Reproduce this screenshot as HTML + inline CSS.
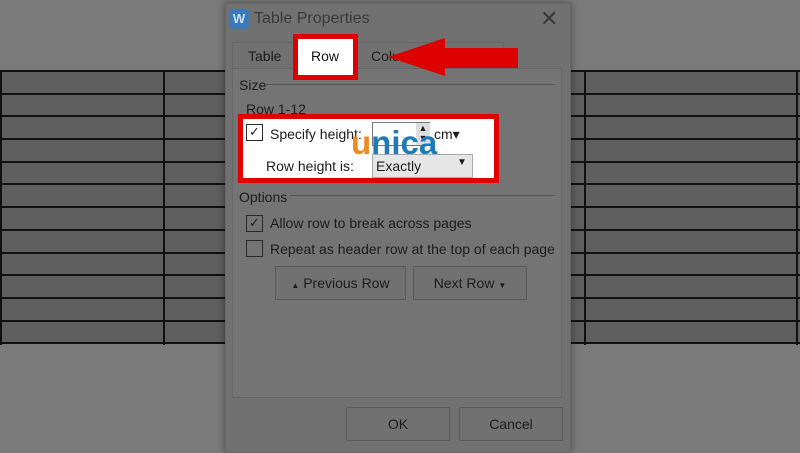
<!DOCTYPE html>
<html><head><meta charset="utf-8"><style>
*{margin:0;padding:0;box-sizing:border-box}
body{width:800px;height:450px;overflow:hidden;background:#7a7a7a;position:relative;font-family:"Liberation Sans",sans-serif;color:#1c1c1c}
.a{position:absolute}
.hl{position:absolute;left:0;width:800px;height:2px;background:#111}
.vl{position:absolute;top:71px;height:274px;width:2px;background:#111}
.t{position:absolute;font-size:14px;white-space:nowrap}
.cb{position:absolute;width:17px;height:17px;border:1.5px solid #2a2a2a}
.btn{position:absolute;border:1px solid #5a5a5a;background:#717171;font-size:14px;text-align:center}
</style></head><body>
<div class="a" style="left:0;top:71px;width:800px;height:273px;background:#5f5f5f"></div>
<div class="hl" style="top:70px"></div><div class="hl" style="top:93px"></div><div class="hl" style="top:115px"></div><div class="hl" style="top:138px"></div><div class="hl" style="top:161px"></div><div class="hl" style="top:183px"></div><div class="hl" style="top:206px"></div><div class="hl" style="top:229px"></div><div class="hl" style="top:252px"></div><div class="hl" style="top:274px"></div><div class="hl" style="top:297px"></div><div class="hl" style="top:320px"></div><div class="hl" style="top:342px"></div>
<div class="vl" style="left:0"></div><div class="vl" style="left:163px"></div><div class="vl" style="left:584px"></div><div class="vl" style="left:796px"></div>
<div class="a" style="left:225px;top:3px;width:346px;height:450px;background:#717171;border:1px solid #666;box-shadow:0 0 8px rgba(0,0,0,.4)"></div>
<div class="a" style="left:229px;top:9px;width:20px;height:20px;background:#3a7ab8;border-radius:4px;color:#cfe0f0;font-size:13px;font-weight:bold;text-align:center;line-height:20px">W</div>
<div class="t" style="left:254px;top:10px;font-size:16px;color:#3a3a3a">Table Properties</div>
<div class="t" style="left:540px;top:6px;font-size:22px;color:#3a3a3a">✕</div>
<div class="a" style="left:232px;top:42px;width:272px;height:30px;border:1px solid #666;border-bottom:none"></div>
<div class="a" style="left:232px;top:68px;width:330px;height:330px;border:1px solid #666;background:#747474"></div>
<div class="t" style="left:248px;top:48px">Table</div>
<div class="t" style="left:371px;top:48px">Colu</div>
<div class="a" style="left:293px;top:34px;width:65px;height:46px;border:5px solid #e00000;background:#fff"></div>
<div class="t" style="left:311px;top:48px;color:#111">Row</div>
<svg class="a" style="left:385px;top:38px" width="135" height="40"><polygon points="3,19 60,0 60,10 133,10 133,30 60,30 60,38" fill="#dd0000"/></svg>
<div class="t" style="left:239px;top:77px">Size</div>
<div class="a" style="left:266px;top:84px;width:289px;height:1px;background:#555"></div>
<div class="t" style="left:246px;top:101px">Row 1-12</div>
<div class="a" style="left:238px;top:114px;width:261px;height:69px;border:5px solid #e00000;background:#fff"></div>
<div class="cb" style="left:246px;top:124px;font-size:13px;line-height:14px;text-align:center">✓</div>
<div class="t" style="left:270px;top:126px">Specify height:</div>
<div class="a" style="left:372px;top:122px;width:58px;height:24px;border:1px solid #777"></div>
<div class="a" style="left:416px;top:123px;width:14px;height:22px;background:#ddd;font-size:9px;line-height:10px;text-align:center">▲<br>▼</div>
<div class="t" style="left:434px;top:126px">cm▾</div>
<div class="t" style="left:351px;top:124px;font-size:33px;font-weight:bold;color:#1f7ab8"><span style="color:#f08a1e">u</span>nica</div>
<div class="t" style="left:266px;top:158px">Row height is:</div>
<div class="a" style="left:372px;top:154px;width:101px;height:24px;background:#e6e6e6;border:1px solid #aaa"></div>
<div class="t" style="left:376px;top:158px">Exactly</div>
<div class="t" style="left:457px;top:157px;font-size:10px">▼</div>
<div class="t" style="left:239px;top:189px">Options</div>
<div class="a" style="left:290px;top:195px;width:265px;height:1px;background:#555"></div>
<div class="cb" style="left:246px;top:215px;font-size:13px;line-height:14px;text-align:center">✓</div>
<div class="t" style="left:270px;top:215px">Allow row to break across pages</div>
<div class="cb" style="left:246px;top:240px"></div>
<div class="t" style="left:270px;top:241px">Repeat as header row at the top of each page</div>
<div class="btn" style="left:275px;top:266px;width:131px;height:34px;line-height:32px"><span style="font-size:8px">▲</span> Previous Row</div>
<div class="btn" style="left:413px;top:266px;width:114px;height:34px;line-height:32px">Next Row <span style="font-size:8px">▼</span></div>
<div class="btn" style="left:346px;top:407px;width:104px;height:34px;line-height:32px">OK</div>
<div class="btn" style="left:459px;top:407px;width:104px;height:34px;line-height:32px">Cancel</div>
</body></html>
